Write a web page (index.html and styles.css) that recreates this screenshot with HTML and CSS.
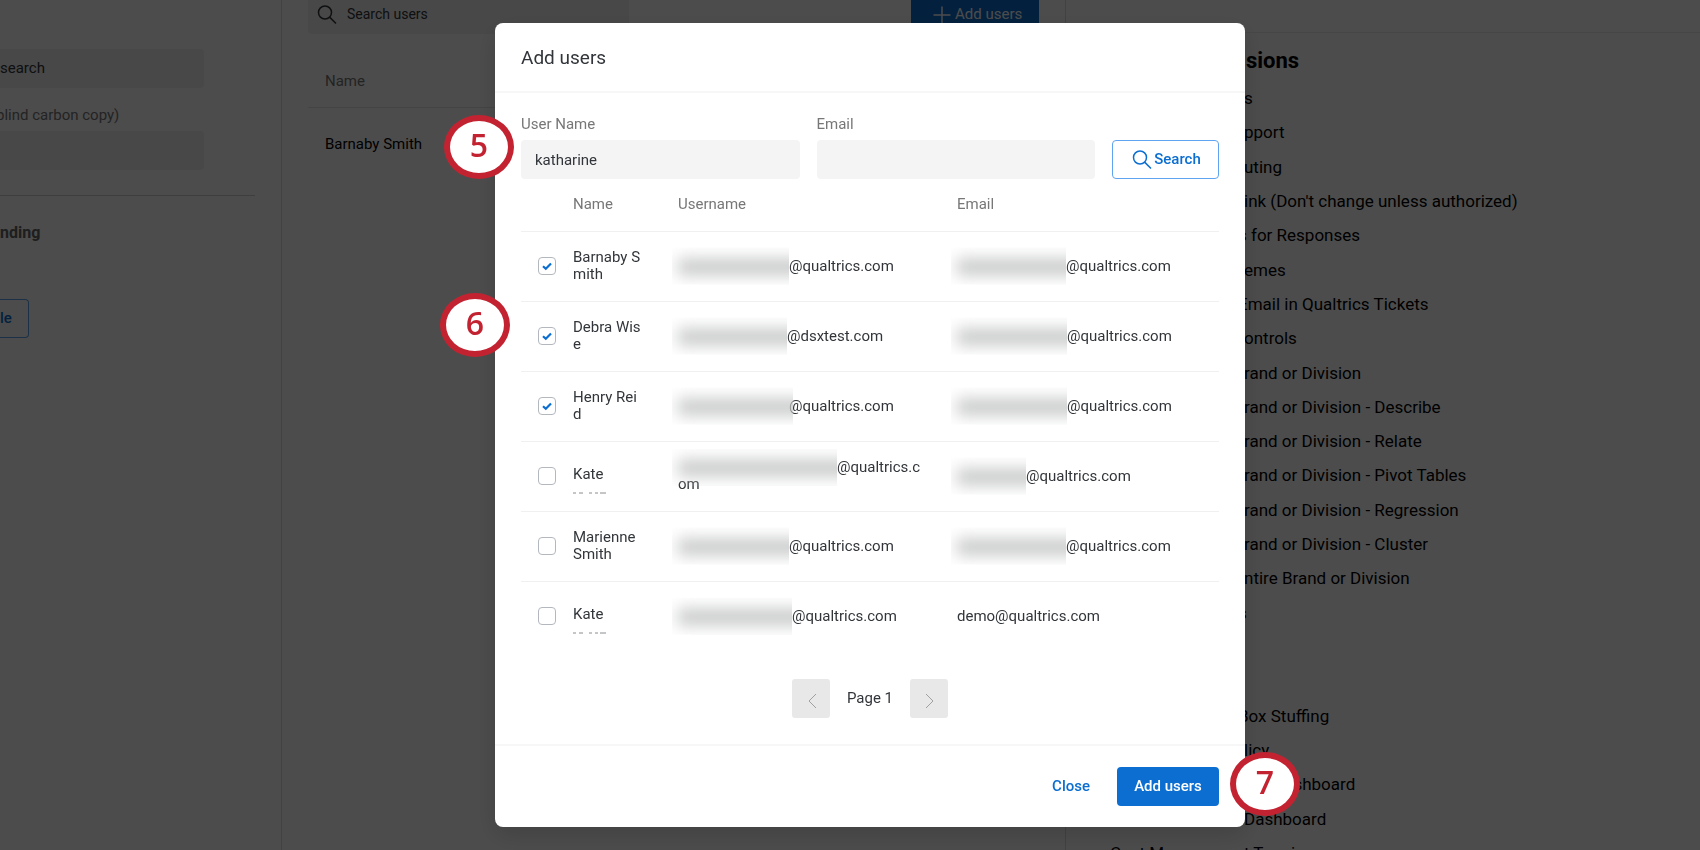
FILE: index.html
```html
<!DOCTYPE html>
<html lang="en">
<head>
<meta charset="utf-8">
<title>Add users</title>
<link rel="stylesheet" href="styles.css">
</head>
<body>
<div class="page">
  <aside class="settings">
    <input class="settings-field" type="text" value="search" aria-label="Sender">
    <label class="settings-label" for="bcc">blind carbon copy)</label>
    <input class="settings-field" id="bcc" type="text">
    <hr class="settings-rule">
    <h3 class="settings-heading">nding</h3>
    <button class="file-button" type="button">le</button>
  </aside>
  <main class="users">
    <div class="users-bar">
      <label class="users-search">
        <svg class="icon" viewBox="0 0 20 20"><circle cx="8" cy="7.5" r="6.5"/><path d="M12.6 12.1 19 18.5"/></svg>
        <input type="text" placeholder="Search users">
      </label>
      <button class="users-add" type="button">
        <svg class="icon" viewBox="0 0 20 20"><path d="M10 1.500V18.500M1.500 10H18.500"/></svg>Add users
      </button>
    </div>
    <div class="users-head">Name</div>
    <div class="users-row">Barnaby Smith</div>
  </main>
  <section class="permissions">
    <div class="permissions-top"></div>
    <h2 class="permissions-title">sions</h2>
    <ul class="permissions-list">
      <li>s</li>
      <li>pport</li>
      <li>uting</li>
      <li>ink (Don't change unless authorized)</li>
      <li class="tucked">s for Responses</li>
      <li>emes</li>
      <li class="tucked">Email in Qualtrics Tickets</li>
      <li>ontrols</li>
      <li>rand or Division</li>
      <li>rand or Division - Describe</li>
      <li>rand or Division - Relate</li>
      <li>rand or Division - Pivot Tables</li>
      <li>rand or Division - Regression</li>
      <li>rand or Division - Cluster</li>
      <li>ntire Brand or Division</li>
      <li class="tucked">s</li>
      <li></li>
      <li></li>
      <li class="tucked">Box Stuffing</li>
      <li>licy</li>
      <li class="indented">Dashboard</li>
      <li>Dashboard</li>
      <li class="full">Cost Management Tagging</li>
    </ul>
  </section>
</div>

<div class="overlay">
  <div class="modal" role="dialog" aria-labelledby="modal-title">
    <header class="modal-header"><h1 id="modal-title">Add users</h1></header>
    <div class="modal-body">
      <form class="filters">
        <div class="filter">
          <label for="user-name">User Name</label>
          <input id="user-name" type="text" value="katharine">
        </div>
        <div class="filter">
          <label for="email">Email</label>
          <input id="email" type="text">
        </div>
        <button class="search-button" type="button">
          <svg class="icon" viewBox="0 0 20 20"><circle cx="8" cy="7.500" r="6.500"/><path d="M12.600 12.100 19 18.500"/></svg>Search
        </button>
      </form>
      <table class="results">
        <colgroup><col class="col-check"><col class="col-name"><col class="col-user"><col></colgroup>
        <thead>
          <tr><th></th><th>Name</th><th>Username</th><th>Email</th></tr>
        </thead>
        <tbody>
          <tr>
            <td><input type="checkbox" checked aria-label="Barnaby Smith"></td>
            <td>Barnaby S<br>mith</td>
            <td><span class="redacted" style="width:111px"></span>@qualtrics.com</td>
            <td><span class="redacted" style="width:109px"></span>@qualtrics.com</td>
          </tr>
          <tr>
            <td><input type="checkbox" checked aria-label="Debra Wise"></td>
            <td>Debra Wis<br>e</td>
            <td><span class="redacted" style="width:109px"></span>@dsxtest.com</td>
            <td><span class="redacted" style="width:110px"></span>@qualtrics.com</td>
          </tr>
          <tr>
            <td><input type="checkbox" checked aria-label="Henry Reid"></td>
            <td>Henry Rei<br>d</td>
            <td><span class="redacted over" style="width:115px"></span>@qualtrics.com</td>
            <td><span class="redacted" style="width:110px"></span>@qualtrics.com</td>
          </tr>
          <tr>
            <td><input type="checkbox" aria-label="Kate"></td>
            <td class="short-name">Kate<svg class="cutoff" viewBox="0 0 34 2"><path d="M0 1H3M6 1H10M16 1H19M22 1H25M27 1H33"/></svg></td>
            <td><span class="redacted" style="width:159px"></span>@qualtrics.c<br>om</td>
            <td><span class="redacted" style="width:69px"></span>@qualtrics.com</td>
          </tr>
          <tr>
            <td><input type="checkbox" aria-label="Marienne Smith"></td>
            <td>Marienne<br>Smith</td>
            <td><span class="redacted" style="width:111px"></span>@qualtrics.com</td>
            <td><span class="redacted" style="width:109px"></span>@qualtrics.com</td>
          </tr>
          <tr>
            <td><input type="checkbox" aria-label="Kate"></td>
            <td class="short-name">Kate<svg class="cutoff" viewBox="0 0 34 2"><path d="M0 1H3M6 1H10M16 1H19M22 1H25M27 1H33"/></svg></td>
            <td><span class="redacted" style="width:114px"></span>@qualtrics.com</td>
            <td>demo@qualtrics.com</td>
          </tr>
        </tbody>
      </table>
      <nav class="pager">
        <button type="button" disabled aria-label="Previous page"><svg viewBox="0 0 10 16"><path d="M9 1 2 8 9 15"/></svg></button>
        <span>Page 1</span>
        <button type="button" disabled aria-label="Next page"><svg viewBox="0 0 10 16"><path d="M1 1 8 8 1 15"/></svg></button>
      </nav>
    </div>
    <footer class="modal-footer">
      <button class="close-button" type="button">Close</button>
      <button class="submit-button" type="button">Add users</button>
    </footer>
    <div class="callout callout-5">5</div>
    <div class="callout callout-6">6</div>
    <div class="callout callout-7">7</div>
  </div>
</div>
</body>
</html>
```

FILE: styles.css
```css
* { box-sizing: border-box; }

body {
  margin: 0;
  height: 100vh;
  overflow: hidden;
  background: #fff;
  color: #32363a;
  font: 15px/17px Roboto, "Liberation Sans", sans-serif;
}

button, input { font: inherit; color: inherit; }
button { cursor: pointer; }
h1, h2, h3, ul { margin: 0; padding: 0; }

.icon {
  width: 20px;
  height: 20px;
  flex: none;
  fill: none;
  stroke: currentColor;
  stroke-width: 1.5;
}

/* Page behind the dialog */
.page {
  display: grid;
  grid-template-columns: 282px 1fr 634px;
  height: 100vh;
}

.settings {
  display: flex;
  flex-direction: column;
  align-items: flex-start;
  padding: 49px 26px 0 0;
  border-right: 1px solid #dcdcdc;
}
.settings-field {
  width: 204px;
  height: 39px;
  padding: 0 0 2px;
  border: 0;
  border-radius: 0 4px 4px 0;
  background: #f0f0f0;
}
.settings-label {
  margin: 19px 0 7px -4px;
  color: #777;
}
.settings-rule {
  width: 100%;
  margin: 25px 0 28px;
  border: 0;
  border-top: 1px solid #d0d0d0;
}
.settings-heading {
  font-size: 16px;
  color: #666;
}
.file-button {
  width: 29px;
  height: 39px;
  margin-top: 58px;
  padding: 0;
  text-align: left;
  color: #0b6ed0;
  font-weight: 500;
  background: none;
  border: 1px solid #5fa4f0;
  border-left: 0;
  border-radius: 0 4px 4px 0;
}

.users {
  border-right: 1px solid #dcdcdc;
  padding: 0 26px;
}
.users-bar {
  display: flex;
  justify-content: space-between;
  margin-top: -5px;
}
.users-search {
  display: flex;
  align-items: center;
  gap: 10px;
  width: 321px;
  height: 39px;
  padding-left: 9px;
  border-radius: 4px;
  background: #f0f0f0;
}
.users-search input {
  border: 0;
  padding: 0;
  background: none;
  font-size: 14px;
}
.users-search input::placeholder { color: #32363a; opacity: 1; }
.users-add {
  display: flex;
  align-items: center;
  gap: 3px;
  height: 39px;
  width: 128px;
  padding: 0 21px;
  border: 0;
  background: #0b6ed0;
  color: #fff;
  white-space: nowrap;
}
.users-head {
  margin-top: 39px;
  padding: 0 17px 17px;
  border-bottom: 1px solid #e4e4e4;
  color: #777;
}
.users-row { padding: 28px 17px; color: #000; }

.permissions {
  display: flex;
  flex-direction: column;
  height: calc(100vh + 20px);
  color: #000;
}
.permissions-top {
  height: 33px;
  border-bottom: 1px solid #ececec;
}
.permissions-title {
  padding: 16px 0 8px 180px;
  font-size: 22px;
  line-height: 24px;
}
.permissions-list {
  flex: 1;
  display: grid;
  grid-auto-rows: 1fr;
  align-items: center;
  padding-left: 178px;
  list-style: none;
  font-size: 17px;
  line-height: 20px;
  white-space: nowrap;
}
.indented { padding-left: 29px; }
.tucked { margin-left: -6px; }
.full { margin-left: -134px; }

/* Dialog */
.overlay {
  position: fixed;
  inset: 0;
  display: flex;
  align-items: center;
  justify-content: center;
  padding-left: 40px;
  background: rgba(0, 0, 0, .7);
}
.modal {
  position: relative;
  width: 750px;
  border-radius: 8px;
  background: #fff;
  box-shadow: 0 8px 24px rgba(0, 0, 0, .15);
}
.modal-header {
  padding: 23px 26px 21px;
  border-bottom: 2px solid #f7f7f7;
}
.modal-header h1 {
  font-size: 19px;
  line-height: 24px;
  font-weight: 400;
}
.modal-body { padding: 23px 26px 26px; }

.filters {
  display: flex;
  align-items: flex-end;
  gap: 17px;
}
.filter { flex: 1; min-width: 0; }
.filter label {
  display: block;
  margin-bottom: 7px;
  color: #777;
}
.filter input {
  display: block;
  width: 100%;
  height: 39px;
  padding: 0 14px;
  border: 0;
  border-radius: 4px;
  background: #f4f4f4;
}
.search-button {
  display: flex;
  align-items: center;
  justify-content: center;
  gap: 2px;
  width: 107px;
  height: 39px;
  padding: 0 0 0 2px;
  border: 1px solid #5fa4f0;
  border-radius: 4px;
  background: #fff;
  color: #0b6ed0;
  font-weight: 500;
}

.results {
  width: 100%;
  table-layout: fixed;
  border-collapse: collapse;
}
.col-check { width: 52px; }
.col-name { width: 105px; }
.col-user { width: 279px; }
.results th {
  height: 52px;
  padding: 0;
  text-align: left;
  font-weight: 400;
  color: #777;
}
.results tr { border-bottom: 1px solid #f0f0f0; }
.results tbody tr:last-child { border-bottom: 0; }
.results td {
  height: 70px;
  padding: 0;
  white-space: nowrap;
}
.results td:first-child { padding-left: 17px; }
.results input {
  appearance: none;
  display: block;
  width: 18px;
  height: 18px;
  margin: 0;
  border: 1px solid #b3b8bf;
  border-radius: 4px;
  background: #fff;
}
.results input:checked {
  background: #fff url("data:image/svg+xml,%3Csvg xmlns='http://www.w3.org/2000/svg' viewBox='0 0 16 16'%3E%3Cpath d='M4 8.200 6.800 10.700 12 5.500' fill='none' stroke='%230b6ed0' stroke-width='2.200'/%3E%3C/svg%3E") center / 16px no-repeat;
}
.results .short-name { padding-top: 8px; }
.cutoff {
  display: block;
  width: 34px;
  height: 2px;
  margin-top: 9px;
  fill: none;
  stroke: #8a8c8e;
  stroke-width: 1;
}

/* Blurred-out part of an address */
.redacted {
  display: inline-block;
  position: relative;
  height: 17px;
  vertical-align: top;
  clip-path: inset(-10px 0 -10px -6px);
}
.redacted::before {
  content: "";
  position: absolute;
  inset: 1px -20px 0 0;
  background: #c4c6c5;
  filter: blur(8px);
}
.redacted.over {
  z-index: 1;
  margin-right: -4px;
}

.pager {
  display: flex;
  align-items: center;
  justify-content: center;
  gap: 17px;
  margin-top: 28px;
}
.pager button {
  display: flex;
  align-items: center;
  justify-content: center;
  width: 38px;
  height: 39px;
  padding: 4px 0 0 2px;
  border: 0;
  border-radius: 3px;
  background: #e8e8e8;
}
.pager svg {
  width: 10px;
  height: 16px;
  fill: none;
  stroke: #a0a0a0;
}

.modal-footer {
  display: flex;
  justify-content: flex-end;
  gap: 12px;
  padding: 21px 26px;
  border-top: 2px solid #f7f7f7;
}
.modal-footer button {
  height: 39px;
  border: 0;
  border-radius: 4px;
  font-weight: 500;
}
.close-button {
  padding: 0 15px;
  background: none;
  color: #0b6ed0;
}
.submit-button {
  width: 102px;
  padding: 0;
  background: #0b6ed0;
  color: #fff;
}

/* Numbered step markers */
.callout {
  position: absolute;
  display: flex;
  align-items: center;
  justify-content: center;
  width: 70px;
  height: 64px;
  padding-bottom: 4px;
  border: 6px solid #c32331;
  border-radius: 50%;
  background: #fff;
  color: #c32331;
  font: 600 32px/40px "Open Sans", "Noto Sans", sans-serif;
}
.callout-5 { left: -51px; top: 92px; }
.callout-6 { left: -55px; top: 270px; }
.callout-7 { right: -55px; bottom: 11px; }
```
